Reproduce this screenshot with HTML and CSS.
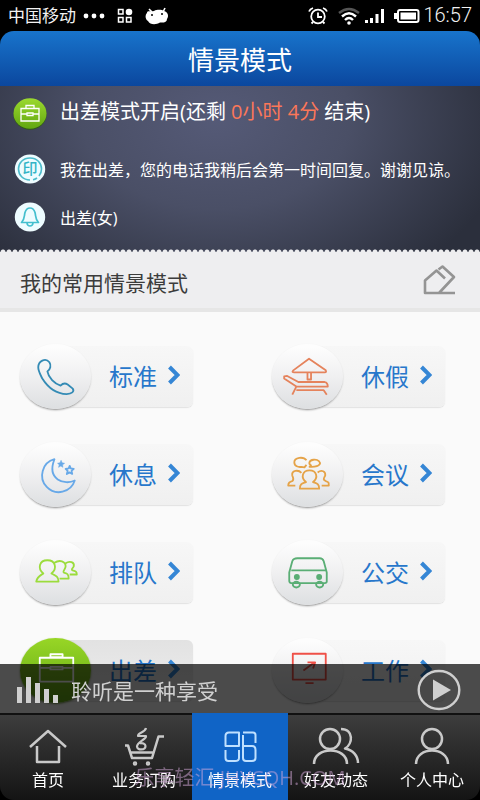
FILE: index.html
```html
<!DOCTYPE html>
<html lang="zh-CN">
<head>
<meta charset="utf-8">
<meta name="viewport" content="width=device-width, initial-scale=1">
<title>情景模式</title>
<link rel="stylesheet" href="styles.css">
</head>
<body>
<div class="status">
  <span class="carrier">中国移动</span>
  <svg class="dots" width="22" height="20" viewBox="0 0 22 20"><circle cx="3" cy="10" r="2.4"/><circle cx="11" cy="10" r="2.4"/><circle cx="19" cy="10" r="2.4"/></svg>
  <svg class="apps" width="16" height="16" viewBox="0 0 16 16"><g fill="none" stroke="#fff" stroke-width="1.5"><path d="M1.5 1.5H6V6H1.5ZM1.5 9.5H6V14H1.5ZM9.5 9.5H14V14H9.5Z"/></g><circle cx="12" cy="4" r="3.3"/></svg>
  <svg class="droid" width="24" height="18" viewBox="0 0 24 18"><path d="M4 2L7 5M20 1L18 5" stroke="#fff" stroke-width="1.6"/><path d="M2 6C2 3 6 5 9 4C13 2 17 3 19 4C23 5 24 9 22 12C22 15 19 16 15 15.500C11 18 5 18 3 14C0 12 0 8 2 6Z"/><circle cx="7" cy="8" r="1" fill="#000"/><circle cx="17" cy="7" r="1" fill="#000"/></svg>
  <div class="signals">
    <svg width="20" height="20" viewBox="0 0 20 20" fill="none" stroke="#fff" stroke-width="1.8"><circle cx="10" cy="10.500" r="6.800"/><path d="M10 6.500V11H14M1 5.500Q2 3 5 2M19 5.500Q18 3 15 2M5 16L3.500 17.500M15 16L16.500 17.500"/></svg>
    <svg class="wifi" width="22" height="18" viewBox="0 0 22 18" fill="none" stroke="#fff" stroke-width="2.400"><path d="M1 6Q11-2 21 6" stroke="#555"/><path d="M4 9.500Q11 3 18 9.500M7 13Q11 9 15 13"/><circle cx="11" cy="16" r="1.800" fill="#fff" stroke="none"/></svg>
    <svg width="20" height="16" viewBox="0 0 20 16"><path d="M0 12H3V15H0ZM5 10H8V15H5ZM10.500 6H13.500V15H10.500ZM16 1H19V15H16Z"/></svg>
    <svg class="battery" width="26" height="16" viewBox="0 0 26 16"><rect x="4" y="2" width="20.500" height="12" rx="2" fill="none" stroke="#fff" stroke-width="2"/><rect x="6.500" y="4.500" width="15.500" height="7"/><path d="M0 5H3V11H0Z"/></svg>
    <time>16:57</time>
  </div>
</div>

<header class="title-bar"><h1>情景模式</h1></header>

<main>
  <section class="current">
    <div class="line line-main">
      <svg width="34" height="34" viewBox="0 0 34 34"><defs><linearGradient id="leaf" x2="0" y2="1"><stop stop-color="#9bd92f"/><stop offset="1" stop-color="#62a710"/></linearGradient></defs><ellipse cx="17" cy="18.500" rx="16.500" ry="15.200" fill="#315b16"/><ellipse cx="17" cy="17.500" rx="16.500" ry="15.200" fill="url(#leaf)"/><path d="M8 12.500H26V25H8ZM13 12V9.500H21V12M8 18H14M20 18H26M14 17H20V19.500H14Z" fill="none" stroke="#fff" stroke-width="1.300"/></svg>
      <p>出差模式开启(还剩 <em>0小时 4分</em> 结束)</p>
    </div>
    <div class="line line-message">
      <svg width="34" height="30" viewBox="0 0 34 30"><ellipse cx="17" cy="15" rx="15.200" ry="14.500" fill="#eefcff"/><path d="M17 26C10 26 5.500 21 5.500 15S10 4 17 4S28.500 9 28.500 15Q28.500 19 26 22M24 24Q22 25.500 20 25.700" fill="none" stroke="#4cbccb" stroke-width="1.600"/><text class="seal" x="17" y="20" text-anchor="middle">印</text></svg>
      <p>我在出差，您的电话我稍后会第一时间回复。谢谢见谅。</p>
    </div>
    <div class="line line-ring">
      <svg width="34" height="30" viewBox="0 0 34 30"><ellipse cx="17" cy="15" rx="15.200" ry="14.500" fill="#eefcff"/><path d="M8.500 20.500C12 17 11 14 12 10.500C13 7 15 6 17 6C19 6 21 7 22 10.500C23 14 22 17 25.500 20.500ZM14 21C14.500 25 19.500 25 20 21" fill="none" stroke="#43bfce" stroke-width="1.700" stroke-linejoin="round"/></svg>
      <p>出差(女)</p>
    </div>
  </section>

  <div class="section-head">
    <h2>我的常用情景模式</h2>
    <button type="button" aria-label="编辑"><svg width="35" height="32" viewBox="0 0 35 32" fill="none" stroke="#949494" stroke-width="2.600" stroke-linejoin="round"><path d="M33 29H3V16.500L14.500 6.500L23 14.500M16.500 5.500L20.500 2.500L32 13L17 29"/></svg></button>
  </div>

  <nav class="modes" aria-label="情景模式">
    <a class="mode" href="#standard"><span class="disc"><svg viewBox="0 0 70 66" stroke="#348bb5"><path d="M18 23C18 17 25 13 29 18C31 21 30 25 27 27C28 33 34 39 40 41C42 39 44 38 47 40L52 44C54 47 51 49 46 49.500C35 49 27 42 22 34C20 30 18 27 18 23Z"/></svg></span><span class="panel">标准<svg class="chevron" viewBox="0 0 12 20"><path d="M1.500 2L9.500 10L1.500 18"/></svg></span></a>
    <a class="mode" href="#holiday"><span class="disc"><svg viewBox="0 0 70 66" stroke="#e5835c"><path d="M36.500 14.500L53 26Q54 28 52 28H22Q19 28 21 26ZM35 28V35H38.500V28M12 32L15 31.500L26 37.500H52Q55 38 55 42H24L12 34ZM24 42L20 50M24 45.500H51L54 50"/></svg></span><span class="panel">休假<svg class="chevron" viewBox="0 0 12 20"><path d="M1.500 2L9.500 10L1.500 18"/></svg></span></a>
    <a class="mode" href="#rest"><span class="disc"><svg viewBox="0 0 70 66" stroke="#68a9e8"><path d="M34 17A16.500 16.500 0 1 0 54 38C44 43 26 37 34 17Z"/><path d="M40.500 18L41.500 20.500L44 21L42 22.500L42.300 25L40.300 23.700L38 25L38.700 22.500L37 21L39.500 20.500Z" fill="#68a9e8" stroke-width=".5"/><path d="M49 23.500L50 26L53 26.500L50.800 28.500L51.500 31.500L49 30L46.200 31.500L47 28.500L45 26.500L48 26Z"/></svg></span><span class="panel">休息<svg class="chevron" viewBox="0 0 12 20"><path d="M1.500 2L9.500 10L1.500 18"/></svg></span></a>
    <a class="mode" href="#meeting"><span class="disc"><svg viewBox="0 0 70 66" stroke="#e5a348"><path d="M34 18C31 14 22 15 22 20C22 24 26 25 29 24.500L32 25L34 22.500"/><path d="M37 24.500L38.500 23C36 22 36 18 41 17.500C46 17 48 20 47 22C45 25 41 24.500 37 24.500Z"/><path d="M33.500 39.500C28 35 30 28 37 28C44 28 46 35 40.500 39.500C44 41 46.500 41 46.500 46H27.500C27.500 41 30 41 33.500 39.500ZM29 30.500C26 27 19 28 20 33C21 36 22 37 20 38.500C17 39 16 40 16 43H23M45 30C49 27 53 29 52.500 33C51 36 50 37 53 38.500C56 39.500 56 40 56 43H49"/></svg></span><span class="panel">会议<svg class="chevron" viewBox="0 0 12 20"><path d="M1.500 2L9.500 10L1.500 18"/></svg></span></a>
    <a class="mode" href="#queue"><span class="disc"><svg viewBox="0 0 70 66" stroke="#9bdc3c"><path d="M23 33C17 28 19 20 27 20C35 20 37 28 31 33C35 35 38 36 38 41H16C17 36 20 35 23 33ZM34 22.500C39 19 45 21 45 26C45 29 42 30 43 32C46 33 48 33 48 38H39M45 23C49 20 54 22 53 26C52 28 50 29 52 30C55 31 56 31 56 34H49"/></svg></span><span class="panel">排队<svg class="chevron" viewBox="0 0 12 20"><path d="M1.500 2L9.500 10L1.500 18"/></svg></span></a>
    <a class="mode" href="#bus"><span class="disc"><svg viewBox="0 0 70 66" stroke="#5aae75"><path d="M25 18H47Q50 18 51 21L54 32V41Q54 42.500 52 42.500H19Q17 42.500 17 40V32L20 21Q21 18 25 18ZM19 30H53"/><ellipse cx="24" cy="44" rx="3.500" ry="2.800"/><ellipse cx="47" cy="44" rx="3.500" ry="2.800"/><circle cx="24.500" cy="36.500" r="2" fill="#5aae75"/><circle cx="46.500" cy="36.500" r="2" fill="#5aae75"/></svg></span><span class="panel">公交<svg class="chevron" viewBox="0 0 12 20"><path d="M1.500 2L9.500 10L1.500 18"/></svg></span></a>
    <a class="mode active" href="#trip" aria-current="true"><span class="disc"><svg viewBox="0 0 70 66" stroke="#fff"><path d="M19.500 19.500H52.500V43H19.500ZM30 19V16H42V19ZM19.500 29.500H30M42 29.500H52.500M30 28.500H42V31H30Z"/></svg></span><span class="panel">出差<svg class="chevron" viewBox="0 0 12 20"><path d="M1.500 2L9.500 10L1.500 18"/></svg></span></a>
    <a class="mode" href="#work"><span class="disc"><svg viewBox="0 0 70 66" stroke="#ef5148"><path d="M20.500 15.500H53V41H20.500ZM33 44.500H41M31 32L42 24M35 24H42.500L40.500 30"/></svg></span><span class="panel">工作<svg class="chevron" viewBox="0 0 12 20"><path d="M1.500 2L9.500 10L1.500 18"/></svg></span></a>
  </nav>
</main>

<footer class="dock">
  <div class="player">
    <svg width="41" height="26" viewBox="0 0 41 26"><path d="M0 10H5V26H0ZM9 0H14V26H9ZM18 6H23V26H18ZM27 12H32V26H27ZM36 18H41V26H36Z" fill="#cfcfcf"/></svg>
    <span>聆听是一种享受</span>
    <button type="button" aria-label="播放"><svg width="44" height="44" viewBox="0 0 44 44"><ellipse cx="22" cy="22" rx="20.300" ry="19" fill="none" stroke="#cfcfcf" stroke-width="2.400"/><path d="M16 11.500L34 22L16 32.500Z" fill="#cfcfcf"/></svg></button>
  </div>
  <nav class="tabs" aria-label="主导航">
    <a href="#home"><svg viewBox="0 0 48 44"><path d="M6 23L24 7L42 23M13 22V38H35V22"/></svg>首页</a>
    <a href="#shop"><svg viewBox="0 0 48 44"><path d="M5 21.500H8L12 34H32L38.500 12.500H44M9.500 28.500H33.500" /><path d="M26 4C25 9 18 8 18 12L26 12C27 15 17 18 17 22.500C17 26.500 25.500 26.500 25.500 22C25.500 19.500 22 18.500 20 19.500" stroke-width="2.200"/><circle cx="15" cy="39.500" r="1"/><circle cx="28" cy="39.500" r="1"/></svg>业务订购</a>
    <a class="selected" href="#modes" aria-current="page"><svg viewBox="0 0 48 44"><path d="M13 8.500H23V22H9.500V12Q9.500 8.500 13 8.500ZM27 8.500H37Q39.500 8.500 39.500 11V19M27 11V22H36Q39.500 22 39.500 26V34Q39.500 37 36 37H30Q27 37 27 34V22M9.500 26V34Q9.500 37 12.500 37H19Q23 37 23 34V26"/></svg>情景模式</a>
    <a href="#friends"><svg viewBox="0 0 48 44"><circle cx="18" cy="15" r="10"/><path d="M2 40C2 22 35 22 35 40M29 5C42 5 41 20 33 24.500C41 26 46 32 46 39"/></svg>好友动态</a>
    <a href="#me"><svg viewBox="0 0 48 44"><circle cx="24" cy="15" r="10"/><path d="M8 40C8 22 40 22 40 40"/></svg>个人中心</a>
  </nav>
  <span class="watermark">乐享轻汇 JHYCQH.COM</span>
</footer>
</body>
</html>
```
FILE: styles.css
```css
* { box-sizing: border-box; }

body {
  margin: 0;
  height: 100vh;
  overflow: hidden;
  background: #000;
  font-family: "Open Sans", "Noto Sans CJK SC", sans-serif;
}

svg { display: block; flex: none; }
h1, h2, p { margin: 0; font-weight: 400; }
a { color: inherit; text-decoration: none; }
button { padding: 0; border: 0; background: none; }

.status {
  display: flex;
  align-items: center;
  height: 31px;
  padding: 0 8px;
  color: #f2f2f2;
  fill: #fff;
}
.carrier { font-size: 17px; line-height: 31px; }
.dots { margin-left: 7px; }
.apps { margin-left: 12px; }
.droid { margin-left: 12px; }
.signals { display: flex; align-items: center; margin-left: auto; }
.wifi { margin: 0 5px 0 10px; }
.battery { margin: 0 3px 0 9px; }
.signals time { font: 300 20px/31px Roboto, sans-serif; }

.title-bar {
  height: 55px;
  border-radius: 14px 14px 0 0;
  background: linear-gradient(#1874cc, #0b479e);
  color: #fff;
  text-align: center;
}
.title-bar h1 { font-size: 26px; line-height: 58px; }

main { height: calc(100vh - 86px); overflow: hidden; background: #fafafa; }

.current {
  position: relative;
  padding: 10px 13px 20px;
  color: #fff;
  background: radial-gradient(ellipse 62% 120% at 45% 20%, #555a77, #4a4f66 45%, #2b2f3c 100%);
}
.current::after {
  content: "";
  position: absolute;
  inset: auto 0 0;
  height: 3px;
  background: radial-gradient(circle at 3px 3px, #eeeef0 2px, transparent 3px) 0 0 / 6px 3px repeat-x;
}
.line { display: flex; align-items: center; gap: 13px; }
.line-main { height: 34px; font-size: 20px; line-height: 24px; }
.line-main p { padding-bottom: 3px; }
.line-message { height: 30px; margin-top: 24px; font-size: 16px; white-space: nowrap; }
.line-ring { height: 30px; margin-top: 18px; font-size: 16px; }
.line em { color: #fb7759; font-style: normal; }
.seal { font-size: 15px; font-weight: 500; fill: #32b4c6; }

.section-head {
  display: flex;
  align-items: center;
  justify-content: space-between;
  height: 60px;
  padding: 2px 23px 0 20px;
  border-bottom: 4px solid #e6e6e6;
  background: #eeeef0;
  color: #3c3c3c;
}
.section-head h2 { padding-top: 3px; font-size: 21px; line-height: 32px; }
.section-head button { padding-bottom: 2px; }

.modes {
  display: grid;
  grid-template-columns: auto auto;
  justify-content: space-between;
  gap: 32px;
  padding: 31px 35px 31px 20px;
}
.mode { display: flex; align-items: center; }
.disc {
  z-index: 1;
  width: 71px;
  height: 65px;
  margin-right: -35px;
  border-radius: 50%;
  background: linear-gradient(#fdfdfd 5%, #f0f0f1 50%, #dddfe1);
  box-shadow: 0 2px 2px -1px #999, 0 1px 2px #ddd;
}
.disc svg { fill: none; stroke-width: 1.8px; stroke-linejoin: round; }
.panel {
  display: flex;
  align-items: center;
  gap: 11px;
  height: 61px;
  padding: 0 13px 2px 53px;
  border-radius: 6px;
  background: linear-gradient(#f7f7f7, #f0f0f0);
  box-shadow: 0 1px 1px #e2e2e2;
  color: #2777cb;
  font-size: 24px;
}
.mode { height: 66px; }
.chevron { width: 12px; height: 20px; fill: none; stroke: #3586d5; stroke-width: 4px; }
.active .disc { background: linear-gradient(#98d626, #61a713); box-shadow: 0 1px 2px #718f48; }
.active .panel { background: linear-gradient(#e2e2e2, #eee); }

.dock { position: fixed; inset: auto 0 0; z-index: 2; background: linear-gradient(transparent 49px, #000 49px); }
.player {
  display: flex;
  align-items: center;
  gap: 13px;
  height: 49px;
  padding: 2px 19px 0 17px;
  background: rgba(0, 0, 0, .7);
  color: #d0d0d0;
  font-size: 21px;
}
.player button { margin-left: auto; }

.tabs {
  display: grid;
  grid-template-columns: repeat(5, 1fr);
  height: 87px;
  overflow: hidden;
  border-radius: 0 0 14px 14px;
  background: linear-gradient(#111 2px, #3d3d3d 2px, #141414);
}
.tabs a {
  display: flex;
  flex-direction: column;
  align-items: center;
  padding-top: 11px;
  color: #fff;
  font-size: 16px;
  line-height: 24px;
}
.tabs svg {
  width: 48px;
  height: 44px;
  fill: none;
  stroke: #c9c9c9;
  stroke-width: 2.5px;
  stroke-linejoin: round;
}
.tabs .selected { background: #1064c6; }
.tabs .selected svg { stroke: #bfe0ff; stroke-width: 2px; }
.watermark {
  position: absolute;
  right: 0;
  bottom: 8px;
  left: 0;
  color: rgba(214, 170, 220, .5);
  font-size: 20px;
  line-height: 28px;
  text-align: center;
  pointer-events: none;
}
```
